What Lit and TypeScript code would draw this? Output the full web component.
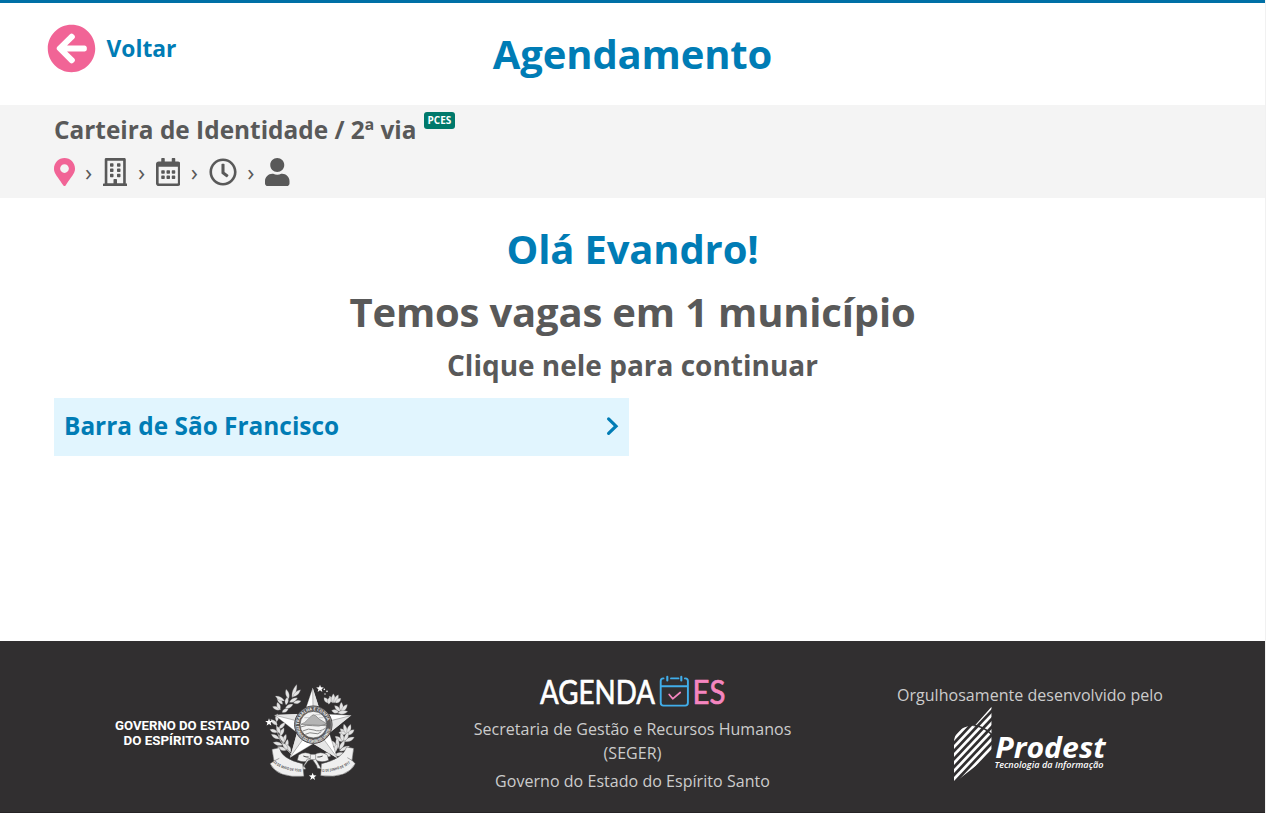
import { LitElement, html, svg, css } from "lit";
import { customElement } from "lit/decorators.js";

const ICONS = {
  back: { w: 512, d: "M256 504C119 504 8 393 8 256S119 8 256 8s248 111 248 248-111 248-248 248zm28.9-143.6L209.4 288H392c13.3 0 24-10.7 24-24v-16c0-13.3-10.7-24-24-24H209.4l75.5-72.4c9.7-9.3 9.9-24.8.4-34.3l-11-10.9c-9.4-9.4-24.6-9.4-33.9 0L107.7 239c-9.4 9.4-9.4 24.6 0 33.9l132.7 132.7c9.4 9.4 24.6 9.4 33.9 0l11-10.9c9.5-9.5 9.3-25-.4-34.3z" },
  pin: { w: 384, d: "M172.268 501.67C26.97 291.031 0 269.413 0 192 0 85.961 85.961 0 192 0s192 85.961 192 192c0 77.413-26.97 99.031-172.268 309.67-9.535 13.774-29.93 13.773-39.464 0zM192 272c44.183 0 80-35.817 80-80s-35.817-80-80-80-80 35.817-80 80 35.817 80 80 80z" },
  building: { w: 448, d: "M128 148v-40c0-6.6 5.4-12 12-12h40c6.6 0 12 5.4 12 12v40c0 6.6-5.4 12-12 12h-40c-6.6 0-12-5.4-12-12zm140 12h40c6.6 0 12-5.4 12-12v-40c0-6.6-5.4-12-12-12h-40c-6.6 0-12 5.4-12 12v40c0 6.6 5.4 12 12 12zm-128 96h40c6.6 0 12-5.4 12-12v-40c0-6.6-5.4-12-12-12h-40c-6.6 0-12 5.4-12 12v40c0 6.6 5.4 12 12 12zm128 0h40c6.6 0 12-5.4 12-12v-40c0-6.6-5.4-12-12-12h-40c-6.6 0-12 5.4-12 12v40c0 6.6 5.4 12 12 12zm-76 84v-40c0-6.6-5.4-12-12-12h-40c-6.6 0-12 5.4-12 12v40c0 6.6 5.4 12 12 12h40c6.6 0 12-5.4 12-12zm76 12h40c6.6 0 12-5.4 12-12v-40c0-6.6-5.4-12-12-12h-40c-6.6 0-12 5.4-12 12v40c0 6.6 5.4 12 12 12zm180 124v36H0v-36c0-6.6 5.4-12 12-12h19.5V24c0-13.3 10.7-24 24-24h337c13.3 0 24 10.7 24 24v440H436c6.6 0 12 5.4 12 12zM79.5 463H192v-67c0-6.6 5.4-12 12-12h40c6.6 0 12 5.4 12 12v67h112.5V49L80 48l-.5 415z" },
  calendar: { w: 448, d: "M148 288h-40c-6.6 0-12-5.4-12-12v-40c0-6.6 5.4-12 12-12h40c6.6 0 12 5.4 12 12v40c0 6.6-5.4 12-12 12zm108-12v-40c0-6.6-5.4-12-12-12h-40c-6.6 0-12 5.4-12 12v40c0 6.6 5.4 12 12 12h40c6.6 0 12-5.4 12-12zm96 0v-40c0-6.6-5.4-12-12-12h-40c-6.6 0-12 5.4-12 12v40c0 6.6 5.4 12 12 12h40c6.6 0 12-5.4 12-12zm-96 96v-40c0-6.6-5.4-12-12-12h-40c-6.6 0-12 5.4-12 12v40c0 6.6 5.4 12 12 12h40c6.6 0 12-5.4 12-12zm-96 0v-40c0-6.6-5.4-12-12-12h-40c-6.6 0-12 5.4-12 12v40c0 6.6 5.4 12 12 12h40c6.6 0 12-5.4 12-12zm192 0v-40c0-6.6-5.4-12-12-12h-40c-6.6 0-12 5.4-12 12v40c0 6.6 5.4 12 12 12h40c6.6 0 12-5.4 12-12zm96-260v352c0 26.5-21.5 48-48 48H48c-26.5 0-48-21.5-48-48V112c0-26.5 21.5-48 48-48h48V12c0-6.6 5.4-12 12-12h40c6.6 0 12 5.4 12 12v52h128V12c0-6.6 5.4-12 12-12h40c6.6 0 12 5.4 12 12v52h48c26.5 0 48 21.5 48 48zm-48 346V160H48v298c0 3.3 2.7 6 6 6h340c3.3 0 6-2.7 6-6z" },
  clock: { w: 512, d: "M256 8C119 8 8 119 8 256s111 248 248 248 248-111 248-248S393 8 256 8zm0 448c-110.5 0-200-89.5-200-200S145.5 56 256 56s200 89.5 200 200-89.5 200-200 200zm61.8-104.4l-84.9-61.7c-3.1-2.3-4.9-5.9-4.9-9.7V116c0-6.6 5.4-12 12-12h32c6.6 0 12 5.4 12 12v141.7l66.8 48.6c5.4 3.9 6.5 11.4 2.6 16.8L334.6 349c-3.9 5.3-11.4 6.5-16.8 2.6z" },
  user: { w: 448, d: "M224 256c70.7 0 128-57.3 128-128S294.7 0 224 0 96 57.3 96 128s57.3 128 128 128zm89.6 32h-16.7c-22.2 10.2-46.9 16-72.9 16s-50.6-5.8-72.9-16h-16.7C60.2 288 0 348.2 0 422.4V464c0 26.5 21.5 48 48 48h352c26.5 0 48-21.5 48-48v-41.6c0-74.2-60.2-134.4-134.4-134.4z" },
};

const icon = (name: keyof typeof ICONS, cls = "") => html`
  <svg class="icon ${cls}" viewBox="0 0 ${ICONS[name].w} 512" aria-hidden="true"><path d=${ICONS[name].d} /></svg>`;

// A leaf pointing up from its base, rotated to the given angle.
const leaf = (x: number, y: number, angle: number, len = 22, wid = 6) => svg`
  <path d="M0 0C${-wid} ${-len * 0.35} ${-wid * 0.8} ${-len * 0.7} 0 ${-len}C${wid * 0.8} ${-len * 0.7} ${wid} ${-len * 0.35} 0 0z"
    transform="translate(${x} ${y}) rotate(${angle})" />`;

const starPath = (cx: number, cy: number, R: number, r: number) =>
  Array.from({ length: 10 }, (_, i) => {
    const a = ((-90 + i * 36) * Math.PI) / 180;
    const q = i % 2 ? r : R;
    return `${(cx + q * Math.cos(a)).toFixed(1)},${(cy + q * Math.sin(a)).toFixed(1)}`;
  }).join(" ");

@customElement("state-crest")
export class StateCrest extends LitElement {
  static styles = css`
    :host { display: block; width: 105px; height: 112px; }
    svg { display: block; width: 100%; height: 100%; }
    .ribbon-text { font: 700 11px "Open Sans", sans-serif; fill: #555; }
    .ring-text { font: 700 12px "Open Sans", sans-serif; fill: #f0f0f0; }
  `;
  render() {
    const left: number[][] = [
      [62, 104, -70, 26], [68, 88, -40, 26], [74, 78, -62, 32], [86, 72, -15, 30], [96, 68, 20, 42], [98, 66, 48, 32],
      [88, 82, 62, 28], [76, 100, 62, 26], [60, 104, -20, 24], [100, 84, 75, 24], [78, 90, 10, 24], [66, 112, 60, 22],
      [50, 140, 5, 24], [52, 150, -50, 26], [56, 162, 45, 28], [52, 172, -70, 24], [60, 184, 25, 28], [58, 192, -60, 28],
      [68, 206, 20, 30], [68, 210, -75, 30], [78, 220, 10, 28], [80, 226, -70, 30], [92, 232, -25, 26], [60, 176, -20, 24],
      [74, 202, -35, 28], [84, 224, -40, 26],
    ];
    const right: number[][] = [
      [220, 84, -30, 24], [220, 84, 0, 28], [222, 84, 28, 28], [206, 84, -40, 22], [206, 88, 10, 22], [226, 84, 50, 22],
      [242, 110, -45, 26], [244, 110, 0, 28], [244, 110, 40, 28], [232, 114, 82, 32], [236, 112, -75, 22],
      [260, 178, -50, 26], [260, 178, -15, 32], [262, 178, 18, 32], [262, 180, 52, 26], [258, 176, -80, 22],
      [248, 200, -55, 28], [250, 200, -15, 28], [252, 200, 25, 32], [254, 200, 65, 32],
      [232, 220, -40, 32], [234, 222, -5, 34], [238, 224, 30, 32], [238, 228, 65, 34],
      [218, 236, -25, 28], [220, 238, 20, 34], [222, 242, 75, 32], [212, 244, -60, 20],
    ];
    return html`
      <svg viewBox="0 0 315 336" aria-label="Brasão do Espírito Santo">
        <g fill="#e4e4e4" stroke="#6a6869" stroke-width="0.8">
          ${left.map(([x, y, a, l]) => leaf(x, y, a, l, 7.5))}
          ${right.map(([x, y, a, l]) => leaf(x, y, a, l, 8))}
        </g>
        <g fill="#fff">
          <polygon points=${starPath(180, 41, 12, 5)} />
          <polygon points=${starPath(27, 142, 12, 5)} />
          <polygon points=${starPath(158, 305, 12, 5)} />
          <circle cx="193" cy="43" r="2.5" /><circle cx="201" cy="49" r="2.5" /><circle cx="195" cy="57" r="2" />
        </g>
        <path d="M48 138Q48 200 96 240" fill="none" stroke="#d8d8d8" stroke-width="2" />
        <polygon points="158,38 183,116 274,121 208,174 232,250 160,206 90,248 111,173 43,120 132,116" fill="#fff" stroke="#444" stroke-width="1" />
        <path d="M158 38L183 116 160 150zM274 121L208 174 160 150zM232 250L160 206 160 150zM90 248L111 173 160 150zM43 120L132 116 160 150z" fill="#e6e6e6" />
        <path d="M158 42L160 150M272 122L160 150M230 246L160 150M92 244L160 150M46 121L160 150" stroke="#777" stroke-width="1.5" fill="none" />
        <circle cx="160" cy="149" r="56" fill="#5c5a5b" stroke="#3a3839" stroke-width="3" />
        <circle cx="160" cy="149" r="54" fill="none" stroke="#bdbdbd" stroke-width="1.5" />
        <defs>
          <path id="arc-top" d="M117 149A43 43 0 0 1 203 149" />
          <path id="arc-low" d="M109 152A51 51 0 0 0 211 152" />
        </defs>
        <text class="ring-text"><textPath href="#arc-top">TRABALHA E CONFIA</textPath></text>
        <text class="ring-text"><textPath href="#arc-low" textLength="150" lengthAdjust="spacingAndGlyphs">ESTADO DO ESPÍRITO SANTO</textPath></text>
        <circle cx="160" cy="149" r="40" fill="#f2f2f2" stroke="#444" stroke-width="2" />
        <path d="M123 148q12-4 20-14l12-12q6-5 12 0l10 10 20 12v8z" fill="#b4b4b4" stroke="#777" stroke-width="2" />
        <path d="M122 156q18-8 36-4t38-4M128 168q18-10 34-3t34-5M136 178q14-8 26-3t22-5" fill="none" stroke="#888" stroke-width="3" />
        <path d="M133 128h16M166 119h16M176 128h14" stroke="#aaa" stroke-width="2" />
        <g fill="#efefef" stroke="#555" stroke-width="1.5">
          <path d="M156 240Q136 226 116 240L112 256Q136 266 156 252zM162 240Q182 226 202 240L206 256Q182 266 162 252z" />
          <path d="M150 250L132 274 138 282 124 284 142 252zM166 250L184 282 172 280 170 272 158 254z" />
          <rect x="151" y="238" width="16" height="16" rx="4" />
          <path d="M36 223L58 218Q64 252 128 266L132 304Q52 310 30 266L42 258z" />
          <path d="M281 220L260 216Q248 252 184 266L182 302Q262 312 286 266L276 256z" />
          <path d="M36 223L42 258 58 250M281 220L276 256 262 248" />
        </g>
        <path d="M130 243q8 4 16 3M172 246q8 1 16-3" fill="none" stroke="#444" stroke-width="3" />
        <defs>
          <path id="rib-left" d="M40 262Q66 288 132 291" />
          <path id="rib-right" d="M184 291Q250 288 278 258" />
        </defs>
        <text class="ribbon-text"><textPath href="#rib-left" textLength="90" lengthAdjust="spacingAndGlyphs">23 DE MAIO DE 1535</textPath></text>
        <text class="ribbon-text"><textPath href="#rib-right" textLength="92" lengthAdjust="spacingAndGlyphs">12 DE JUNHO DE 1817</textPath></text>
      </svg>`;
  }
}

@customElement("agenda-logo")
export class AgendaLogo extends LitElement {
  static styles = css`
    :host { display: block; width: 205px; height: 50px; }
    svg { display: block; }
    text { font: 400 32px "Lato", sans-serif; stroke-width: 0.7; stroke-linejoin: round; }
    .white { fill: #fff; stroke: #fff; }
    .pink { fill: #f586c0; stroke: #f586c0; }
  `;
  render() {
    return html`
      <svg width="205" height="50" viewBox="0 0 205 50">
        <text class="white" x="10" y="39.3" textLength="115" lengthAdjust="spacingAndGlyphs">AGENDA</text>
        <g fill="none" stroke="#41aeea" stroke-width="1.9" stroke-linecap="round">
          <path d="M133.5 13.4h-.3q-2.5 0-2.5 2.6v21.8q0 2.8 2.8 2.8h21.6q2.8 0 2.8-2.8v-21.8q0-2.6-2.5-2.6h-.5M141 13.4h7.5M131 21.2h26.5" />
          <path d="M137.3 11.7v3.8M151.3 11.7v3.8" stroke-width="2.1" />
        </g>
        <path d="M139.2 29.5l3.5 4.3 7.5-6.3" fill="none" stroke="#f586c0" stroke-width="1.7" stroke-linecap="round" stroke-linejoin="round" />
        <text class="pink" x="162.5" y="39.3" textLength="33" lengthAdjust="spacingAndGlyphs">ES</text>
      </svg>`;
  }
}

@customElement("prodest-logo")
export class ProdestLogo extends LitElement {
  static styles = css`
    :host { display: block; width: 180px; height: 83px; }
    svg { display: block; }
    text { fill: #fff; font-family: "Open Sans", sans-serif; font-style: italic; }
    .name { font-size: 28.5px; font-weight: 700; }
    .tag { font-size: 9.4px; font-weight: 600; }
  `;
  render() {
    const stripes = [256, 232, 208, 184, 160, 136, 112];
    return html`
      <svg width="180" height="83" viewBox="0 0 180 83">
        <defs>
          <clipPath id="mark"><path d="M12 112Q18 74 62 68L76 66 125 11V142Q118 172 84 184L12 240z" /></clipPath>
        </defs>
        <g transform="translate(10 -4) scale(0.33333)">
          <g clip-path="url(#mark)">
            ${stripes.map((y) => svg`<path d="M2 ${y + 6.6}L135 ${y - 134.4}" stroke="#fff" stroke-width="8.2" />`)}
            <path d="M56 66Q98 64 128 98" fill="none" stroke="#312f30" stroke-width="4.5" />
          </g>
        </g>
        <text class="name" x="55.2" y="50.8" textLength="110.5" lengthAdjust="spacingAndGlyphs">Prodest</text>
        <text class="tag" x="54.5" y="61.2" textLength="109" lengthAdjust="spacingAndGlyphs">Tecnologia da Informação</text>
      </svg>`;
  }
}

@customElement("app-root")
export class AppRoot extends LitElement {
  static styles = css`
    :host {
      display: flex; flex-direction: column; box-sizing: border-box; height: 813px;
      border-right: 1px solid #f1f1f1; background: #fff;
      color: #595959; font: 400 16px/24px "Open Sans", sans-serif;
    }
    * { box-sizing: border-box; }
    h1, h2, h3, p { margin: 0; }
    .icon { display: block; height: 28px; fill: currentColor; }
    .pink { color: #f16496; }
    header {
      height: 105px; border-top: 3px solid #0070a6; padding: 0 47px;
      display: grid; grid-template-columns: 1fr auto 1fr; align-items: start; color: #007cb5;
    }
    .back { display: flex; align-items: center; gap: 11px; margin-top: 21px; font-size: 22.8px; font-weight: 700; }
    .back .icon { height: 49px; margin-left: -0.5px; color: #f16496; }
    header h1 { font-size: 40px; line-height: 60px; margin-top: 21px; letter-spacing: -0.15px; }
    .service { height: 93px; background: #f4f4f4; padding: 7px 54px 0; }
    .service-name { display: flex; align-items: flex-start; gap: 7px; font-size: 24.4px; line-height: 36px; font-weight: 700; }
    .tag { background: #00796b; color: #fff; font-size: 10px; line-height: 17px; height: 17px; padding: 0 4px; border-radius: 3px; }
    .steps { display: flex; align-items: center; height: 28px; margin-top: 9.5px; font-size: 24px; margin-left: -0.5px; }
    .sep { width: 28.4px; text-align: center; }
    main { flex: 1; padding: 21px 54px 0; display: flex; flex-direction: column; }
    main h1, main h2, main h3 { text-align: center; }
    main h1 { font-size: 40px; line-height: 60px; color: #007cb5; letter-spacing: -0.15px; }
    main h2 { font-size: 40px; line-height: 60px; margin-top: 3px; letter-spacing: -0.18px; }
    main h3 { font-size: 28px; line-height: 42px; margin-top: 2px; }
    .city {
      width: 575px; height: 58px; margin-top: 12px; padding: 0 10px 2px; background: #e1f5fe; color: #007cb5;
      display: flex; align-items: center; justify-content: space-between; font-size: 24.4px; font-weight: 700;
    }
    footer {
      height: 172px; background: #312f30; border-bottom: 1px solid #262425; color: #ccc; letter-spacing: 0.04px;
      display: grid; grid-template-columns: repeat(3, 397.5px); justify-content: center; text-align: center;
    }
    .gov { display: flex; justify-content: center; padding: 34px 0 0 9px; }
    .gov-name { width: 140px; margin: 41px 6px 0 0; overflow: visible; }
    .gov-name text { font: 700 13.4px "Roboto", sans-serif; fill: #fff; letter-spacing: 0; }
    .agenda { display: flex; flex-direction: column; align-items: center; padding-top: 24px; }
    .agenda p { width: 340px; margin-top: 2px; }
    .agenda p + p { margin-top: 4px; }
    .dev { display: flex; flex-direction: column; align-items: center; padding-top: 42px; }
  `;
  render() {
    const sep = html`<span class="sep">›</span>`;
    return html`
      <header>
        <div class="back">${icon("back")}<span>Voltar</span></div>
        <h1>Agendamento</h1>
      </header>
      <section class="service">
        <div class="service-name"><span>Carteira de Identidade / 2ª via</span><span class="tag">PCES</span></div>
        <div class="steps">
          ${icon("pin", "pink")}${sep}${icon("building")}${sep}${icon("calendar")}${sep}${icon("clock")}${sep}${icon("user")}
        </div>
      </section>
      <main>
        <h1>Olá Evandro!</h1>
        <h2>Temos vagas em 1 município</h2>
        <h3>Clique nele para continuar</h3>
        <div class="city">
          <span>Barra de São Francisco</span>
          <svg width="13" height="20" viewBox="0 0 13 20" fill="none" stroke="#007cb5" stroke-width="3.2" stroke-linecap="round" stroke-linejoin="miter"><path d="M2.6 2.9L10 10.2 2.6 17.3" /></svg>
        </div>
      </main>
      <footer>
        <div class="gov">
          <svg class="gov-name" width="140" height="32" viewBox="0 0 140 32">
            <text x="1" y="14" textLength="134.5" lengthAdjust="spacingAndGlyphs">GOVERNO DO ESTADO</text>
            <text x="9.5" y="29" textLength="126" lengthAdjust="spacingAndGlyphs">DO ESPÍRITO SANTO</text>
          </svg>
          <state-crest></state-crest>
        </div>
        <div class="agenda">
          <agenda-logo></agenda-logo>
          <p>Secretaria de Gestão e Recursos Humanos (SEGER)</p>
          <p>Governo do Estado do Espírito Santo</p>
        </div>
        <div class="dev">
          <p>Orgulhosamente desenvolvido pelo</p>
          <prodest-logo></prodest-logo>
        </div>
      </footer>`;
  }
}
